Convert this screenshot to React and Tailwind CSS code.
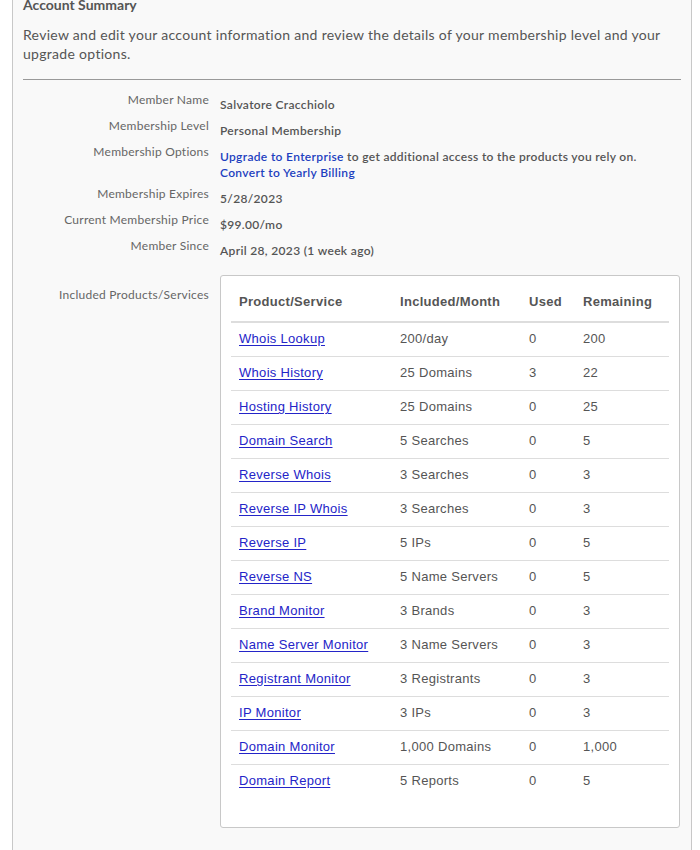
import React from "react";

const rows = [
  ["Whois Lookup", "200/day", "0", "200"],
  ["Whois History", "25 Domains", "3", "22"],
  ["Hosting History", "25 Domains", "0", "25"],
  ["Domain Search", "5 Searches", "0", "5"],
  ["Reverse Whois", "3 Searches", "0", "3"],
  ["Reverse IP Whois", "3 Searches", "0", "3"],
  ["Reverse IP", "5 IPs", "0", "5"],
  ["Reverse NS", "5 Name Servers", "0", "5"],
  ["Brand Monitor", "3 Brands", "0", "3"],
  ["Name Server Monitor", "3 Name Servers", "0", "3"],
  ["Registrant Monitor", "3 Registrants", "0", "3"],
  ["IP Monitor", "3 IPs", "0", "3"],
  ["Domain Monitor", "1,000 Domains", "0", "1,000"],
  ["Domain Report", "5 Reports", "0", "5"],
];

function Row({ label, children }) {
  return (
    <>
      <div className="text-right text-[12px] leading-[16px] text-[#666] tracking-[0.25px]">{label}</div>
      <div className="pt-[5px] pb-[5px] text-[12px] leading-[16px] text-[#555] font-semibold tracking-[0.33px]">{children}</div>
    </>
  );
}

export default function App() {
  return (
    <div className="bg-white min-h-[850px] w-[700px] overflow-hidden">
      <div className="ml-[12px] w-[680px] -mt-[4px] border-x border-[#c8c8c8] bg-[#f9f9f9] px-[10px] pb-[40px] font-['Lato',sans-serif]">
        <div className="text-[14px] leading-[18px] font-bold text-[#555]">Account Summary</div>
        <p className="mt-[11px] text-[14px] leading-[19px] text-[#555] tracking-[0.3px]">
          Review and edit your account information and review the details of your membership level and your upgrade options.
        </p>
        <div className="mt-[16px] h-px bg-[#999]" />
        <div className="mt-[12px] grid grid-cols-[186px_1fr] gap-x-[11px]">
          <Row label="Member Name">Salvatore Cracchiolo</Row>
          <Row label="Membership Level">Personal Membership</Row>
          <Row label="Membership Options">
            <a className="text-[#1d3fbf]">Upgrade to Enterprise</a> to get additional access to the products you rely on.
            <br />
            <a className="text-[#1d3fbf]">Convert to Yearly Billing</a>
          </Row>
          <Row label="Membership Expires">5/28/2023</Row>
          <Row label="Current Membership Price">$99.00/mo</Row>
          <Row label="Member Since">April 28, 2023 (1 week ago)</Row>
          <div className="text-right text-[12px] leading-[16px] text-[#666] tracking-[0.25px] pt-[23px]">Included Products/Services</div>
          <div className="mt-[11px] w-[460px] rounded-[3px] border border-[#c8c8c8] bg-white px-[10px] pt-[10px] pb-[29px]">
            <table className="w-[438px] border-collapse font-['Liberation_Sans',Arial,sans-serif] text-[13px] leading-[18px] tracking-[0.3px] text-[#555]">
              <thead>
                <tr className="border-b-2 border-[#ddd]">
                  <th className="w-[161px] pl-[8px] pt-[7px] pb-[10px] text-left font-bold">Product/Service</th>
                  <th className="w-[129px] pl-[8px] pt-[7px] pb-[10px] text-left font-bold">Included/Month</th>
                  <th className="w-[54px] pl-[8px] pt-[7px] pb-[10px] text-left font-bold">Used</th>
                  <th className="pl-[8px] pt-[7px] pb-[10px] text-left font-bold">Remaining</th>
                </tr>
              </thead>
              <tbody>
                {rows.map((r, i) => (
                  <tr key={r[0]} className={i < rows.length - 1 ? "border-b border-[#ddd]" : ""}>
                    <td className="pl-[8px] pt-[7px] pb-[8px]">
                      <a className="text-[#2424c8] underline underline-offset-[2px]">{r[0]}</a>
                    </td>
                    <td className="pl-[8px] pt-[7px] pb-[8px]">{r[1]}</td>
                    <td className="pl-[8px] pt-[7px] pb-[8px]">{r[2]}</td>
                    <td className="pl-[8px] pt-[7px] pb-[8px]">{r[3]}</td>
                  </tr>
                ))}
              </tbody>
            </table>
          </div>
        </div>
      </div>
    </div>
  );
}
